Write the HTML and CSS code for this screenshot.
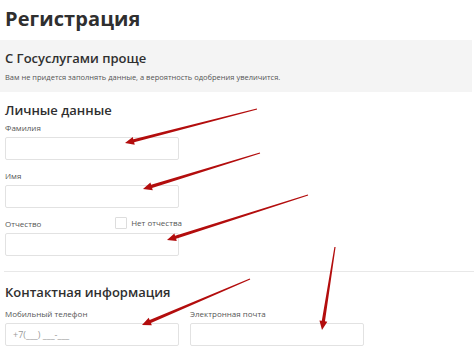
FILE: index.html
```html
<!DOCTYPE html>
<html lang="ru">
<head>
  <meta charset="UTF-8">
  <meta name="viewport" content="width=device-width, initial-scale=1.0">
  <title>Регистрация</title>
  <link rel="stylesheet" href="styles.css">
</head>
<body>
  <div class="page">
    <h1 class="title">Регистрация</h1>

    <div class="promo">
      <h2 class="promo-title">С Госуслугами проще</h2>
      <p class="promo-text">Вам не придется заполнять данные, а вероятность одобрения увеличится.</p>
    </div>

    <div class="section">
      <h2 class="section-title">Личные данные</h2>
      <div class="field">
        <label class="label">Фамилия</label>
        <div class="input"></div>
      </div>
      <div class="field">
        <label class="label">Имя</label>
        <div class="input"></div>
      </div>
      <div class="field">
        <div class="label-row">
          <label class="label">Отчество</label>
          <span class="check"><span class="box"></span>Нет отчества</span>
        </div>
        <div class="input"></div>
      </div>
    </div>

    <hr class="divider">

    <div class="section contacts">
      <h2 class="section-title">Контактная информация</h2>
      <div class="row">
        <div class="field">
          <label class="label">Мобильный телефон</label>
          <div class="input placeholder">+7(___) ___-___</div>
        </div>
        <div class="field">
          <label class="label">Электронная почта</label>
          <div class="input"></div>
        </div>
      </div>
    </div>
  </div>

  <!-- red pointer arrows drawn over the form -->
  <svg class="arrows" width="474" height="353" viewBox="0 0 474 353">
    <g fill="#b30d0d">
      <polygon points="256.85,108.42 133.32,139.21 132.72,136.89 125,143 134.72,144.63 134.12,142.31 257.15,109.58"/>
      <polygon points="259.82,152.43 151.13,184.82 150.42,182.53 143,189 152.78,190.17 152.07,187.88 260.18,153.57"/>
      <polygon points="307.82,194.43 175.08,235.74 174.35,233.45 167,240 176.79,241.07 176.06,238.78 308.18,195.57"/>
      <polygon points="249.76,278.45 149.65,320 148.71,317.79 142,325 151.85,325.15 150.91,322.94 250.24,279.55"/>
      <polygon points="334.41,246.91 321.81,320.86 319.44,320.49 322,330 327.34,321.73 324.97,321.36 335.59,247.09"/>
    </g>
  </svg>
</body>
</html>
```

FILE: styles.css
```css
* {
  margin: 0;
  padding: 0;
  box-sizing: border-box;
}

body {
  background: #fff;
  font-family: "Open Sans", "Noto Sans", sans-serif;
  color: #333;
  width: 474px;
  height: 353px;
  overflow: hidden;
  position: relative;
}

.page {
  padding-top: 6px;
}

.title {
  font-size: 20px;
  line-height: 26px;
  font-weight: 700;
  color: #2f2f2f;
  padding-left: 5px;
  letter-spacing: 0.1px;
}

.promo {
  margin-top: 8px;
  width: 472px;
  height: 52px;
  background: #f4f4f4;
  padding: 9px 5px 0;
}

.promo-title {
  font-size: 13px;
  line-height: 18px;
  font-weight: 600;
  color: #2f2f2f;
}

.promo-text {
  margin-top: 5px;
  font-size: 7.5px;
  line-height: 10px;
  color: #555;
}

.section {
  padding-left: 5px;
}

.section-title {
  font-size: 13px;
  line-height: 18px;
  font-weight: 600;
  color: #2f2f2f;
  margin-top: 9px;
}

.contacts .section-title {
  margin-top: 11px;
}

.field {
  width: 174px;
  margin-top: 3px;
}

.field + .field {
  margin-top: 10px;
}

.label-row {
  display: flex;
  justify-content: space-between;
  align-items: center;
}

.label {
  display: block;
  font-size: 8px;
  line-height: 12px;
  color: #555;
}

.check {
  display: flex;
  align-items: center;
  gap: 4px;
  font-size: 8px;
  line-height: 12px;
  color: #555;
  margin-top: -2px;
  margin-right: -3px;
}

.box {
  width: 12px;
  height: 12px;
  border: 1px solid #ddd;
  border-radius: 1px;
}

.input {
  height: 23px;
  border: 1px solid #e2e2e2;
  border-radius: 2px;
  margin-top: 3px;
}

.placeholder {
  font-size: 9px;
  line-height: 21px;
  color: #9a9a9a;
  padding-left: 7px;
}

.divider {
  border: 0;
  border-top: 1px solid #e8e8e8;
  margin: 15px 0 0 4px;
}

.row {
  display: flex;
  gap: 11px;
  margin-top: 7px;
}

.row .field {
  margin-top: 0;
}

.arrows {
  position: absolute;
  left: 0;
  top: 0;
}
```
